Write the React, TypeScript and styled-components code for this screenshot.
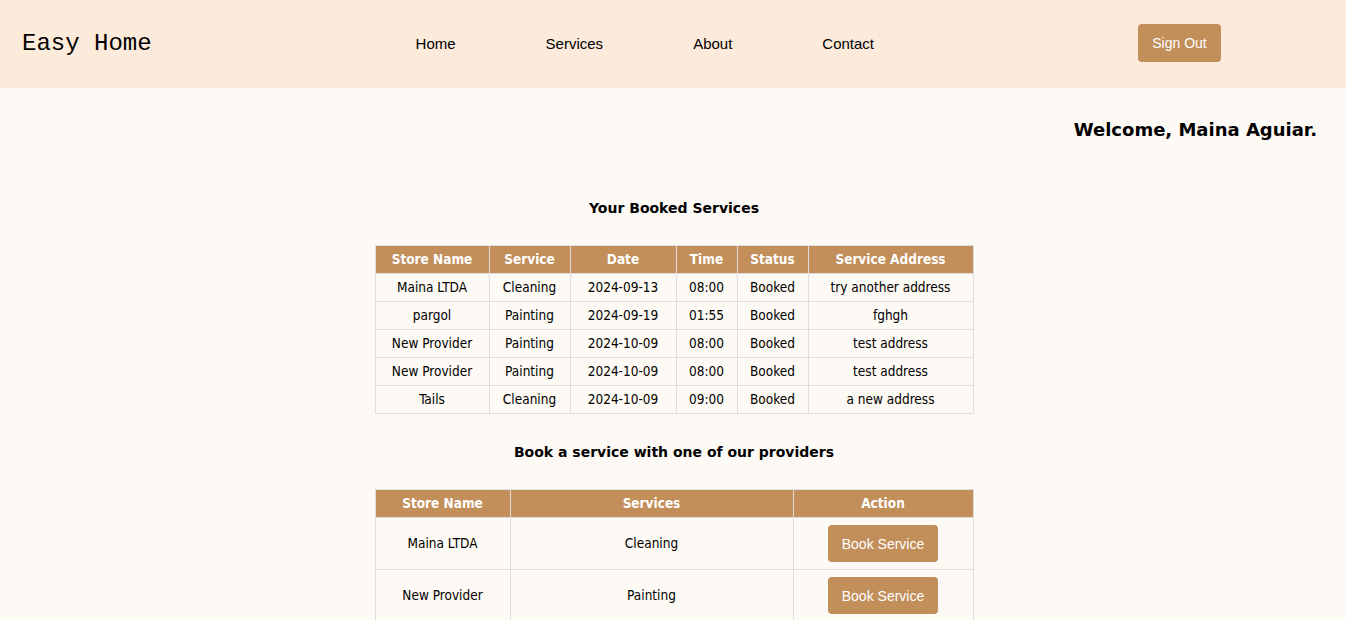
import React from "react";
import styled, { createGlobalStyle } from "styled-components";

const Global = createGlobalStyle`
  html, body { margin: 0; padding: 0; }
  body {
    background: #fdf9f4;
    font-family: "DejaVu Sans Condensed", "DejaVu Sans", sans-serif;
    font-stretch: condensed;
    color: #000;
  }
`;

const Header = styled.header`
  height: 88px;
  background: #fcebda;
  display: flex;
  align-items: center;
  justify-content: space-between;
  padding: 0 125px 2px 22px;
  box-sizing: border-box;
`;

const Logo = styled.div`
  font-family: "Liberation Mono", "Courier New", monospace;
  font-size: 24px;
  color: #000;
`;

const Nav = styled.nav`
  display: flex;
  gap: 90px;
  font-family: "Liberation Sans", Arial, sans-serif;
  font-size: 15px;
`;

const NavLink = styled.a`
  color: #000;
  text-decoration: none;
`;

const Button = styled.button<{ $w: number; $h: number }>`
  width: ${(p) => p.$w}px;
  height: ${(p) => p.$h}px;
  background: #c28e5a;
  color: #fff;
  border: none;
  border-radius: 4px;
  font-family: "Liberation Sans", Arial, sans-serif;
  font-size: 14px;
  padding: 0;
  cursor: pointer;
`;

const Main = styled.main`
  display: flex;
  flex-direction: column;
  align-items: center;
  padding-left: 2px;
`;

const Welcome = styled.h1`
  align-self: flex-end;
  margin: 31px 29px 0 0;
  font-family: "DejaVu Sans", sans-serif;
  font-stretch: normal;
  font-size: 18px;
  line-height: 22px;
  font-weight: bold;
`;

const SectionTitle = styled.h2<{ $top: number; $bottom: number }>`
  margin: ${(p) => p.$top}px 0 ${(p) => p.$bottom}px;
  font-family: "DejaVu Sans", sans-serif;
  font-stretch: normal;
  font-size: 14px;
  line-height: 18px;
  font-weight: bold;
  text-align: center;
`;

const Table = styled.table`
  border-collapse: collapse;
  width: 598px;
  table-layout: fixed;
  font-size: 13.5px;
`;

const Th = styled.th`
  background: #c28e5a;
  color: #fff;
  font-weight: bold;
  border: 1px solid #ddd;
  padding: 5px 3px;
  line-height: 17px;
  text-align: center;
`;

const Td = styled.td<{ $tall?: boolean }>`
  border: 1px solid #ddd;
  padding: ${(p) => (p.$tall ? "7px 3px" : "5px 3px")};
  line-height: 17px;
  text-align: center;
  vertical-align: middle;
`;

const booked = [
  ["Maina LTDA", "Cleaning", "2024-09-13", "08:00", "Booked", "try another address"],
  ["pargol", "Painting", "2024-09-19", "01:55", "Booked", "fghgh"],
  ["New Provider", "Painting", "2024-10-09", "08:00", "Booked", "test address"],
  ["New Provider", "Painting", "2024-10-09", "08:00", "Booked", "test address"],
  ["Tails", "Cleaning", "2024-10-09", "09:00", "Booked", "a new address"],
];

const providers = [
  ["Maina LTDA", "Cleaning"],
  ["New Provider", "Painting"],
];

const bookedCols = [114, 81, 106, 61, 71, 165];
const provCols = [135, 283, 180];

export default function App() {
  return (
    <>
      <Global />
      <Header>
        <Logo>Easy Home</Logo>
        <Nav>
          <NavLink href="#">Home</NavLink>
          <NavLink href="#">Services</NavLink>
          <NavLink href="#">About</NavLink>
          <NavLink href="#">Contact</NavLink>
        </Nav>
        <Button $w={83} $h={38}>Sign Out</Button>
      </Header>
      <Main>
        <Welcome>Welcome, Maina Aguiar.</Welcome>
        <SectionTitle $top={58} $bottom={28}>Your Booked Services</SectionTitle>
        <Table>
          <colgroup>
            {bookedCols.map((w, i) => (
              <col key={i} style={{ width: w }} />
            ))}
          </colgroup>
          <thead>
            <tr>
              <Th>Store Name</Th>
              <Th>Service</Th>
              <Th>Date</Th>
              <Th>Time</Th>
              <Th>Status</Th>
              <Th>Service Address</Th>
            </tr>
          </thead>
          <tbody>
            {booked.map((r, i) => (
              <tr key={i}>
                {r.map((c, j) => (
                  <Td key={j}>{c}</Td>
                ))}
              </tr>
            ))}
          </tbody>
        </Table>
        <SectionTitle $top={29} $bottom={28}>Book a service with one of our providers</SectionTitle>
        <Table>
          <colgroup>
            {provCols.map((w, i) => (
              <col key={i} style={{ width: w }} />
            ))}
          </colgroup>
          <thead>
            <tr>
              <Th>Store Name</Th>
              <Th>Services</Th>
              <Th>Action</Th>
            </tr>
          </thead>
          <tbody>
            {providers.map((r, i) => (
              <tr key={i}>
                <Td $tall>{r[0]}</Td>
                <Td $tall>{r[1]}</Td>
                <Td $tall>
                  <Button $w={110} $h={37}>Book Service</Button>
                </Td>
              </tr>
            ))}
          </tbody>
        </Table>
      </Main>
    </>
  );
}
